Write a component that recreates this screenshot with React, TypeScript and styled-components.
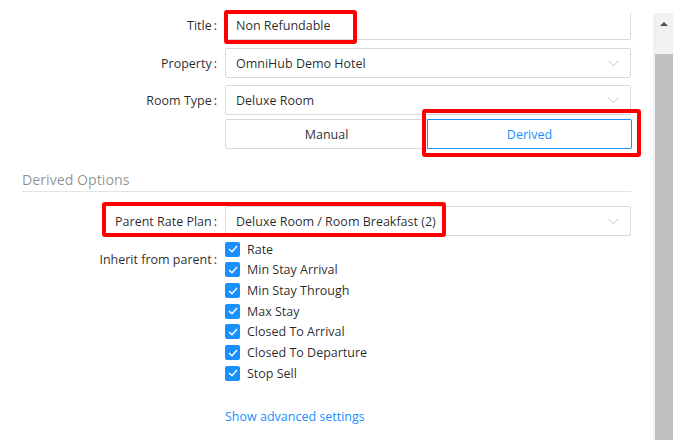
import React from 'react';
import styled, { createGlobalStyle } from 'styled-components';

const GlobalStyle = createGlobalStyle`
  html, body {
    margin: 0;
    padding: 0;
    background: #fff;
  }
  body {
    font-family: "Open Sans", "Noto Sans", sans-serif;
    color: rgba(0, 0, 0, 0.85);
  }
`;

const Page = styled.div`
  position: relative;
  width: 673px;
  height: 440px;
  padding-top: 13px;
  box-sizing: border-box;
  display: flex;
  overflow: hidden;
  background: #fff;
`;

const Scroller = styled.div`
  flex: 1;
  overflow: hidden;
`;

const Content = styled.div`
  margin-top: -3px;
  padding: 0 22px;
`;

const FormRow = styled.div<{ $mb?: number }>`
  display: grid;
  grid-template-columns: 203px 406px;
  margin-bottom: ${(p) => p.$mb ?? 8}px;
`;

const Label = styled.div<{ $top?: number }>`
  display: flex;
  justify-content: flex-end;
  align-items: center;
  height: 30px;
  margin-top: ${(p) => p.$top ?? 0}px;
  font-size: 12.5px;
  white-space: nowrap;

  &::after {
    content: ':';
    margin: 0 8px 0 2px;
  }
`;

const Field = styled.div`
  height: 30px;
  box-sizing: border-box;
  border: 1px solid #d9d9d9;
  border-radius: 2px;
  padding: 0 11px 0 10px;
  display: flex;
  align-items: center;
  justify-content: space-between;
  font-size: 12.5px;
`;

const Chevron = () => (
  <svg width="11" height="7" viewBox="0 0 11 7">
    <polyline points="0.5,0.8 5.5,5.8 10.5,0.8" fill="none" stroke="#c4c4c4" strokeWidth="1" />
  </svg>
);

const ButtonGroup = styled.div`
  display: grid;
  grid-template-columns: 203px 204px;
`;

const ModeButton = styled.div<{ $active?: boolean }>`
  height: 30px;
  box-sizing: border-box;
  border: 1px solid ${(p) => (p.$active ? '#1890ff' : '#d9d9d9')};
  color: ${(p) => (p.$active ? '#1890ff' : 'rgba(0, 0, 0, 0.85)')};
  margin-left: ${(p) => (p.$active ? '-1px' : '0')};
  position: relative;
  z-index: ${(p) => (p.$active ? 1 : 0)};
  border-radius: ${(p) => (p.$active ? '0 2px 2px 0' : '2px 0 0 2px')};
  display: flex;
  align-items: center;
  justify-content: center;
  font-size: 12.5px;
`;

const SectionTitle = styled.div`
  margin: 20px 0 14px;
  height: 22px;
  line-height: 22px;
  border-bottom: 1px solid #e3e3e3;
  font-size: 14.2px;
  color: rgba(0, 0, 0, 0.45);
`;

const CheckList = styled.div`
  display: flex;
  flex-direction: column;
`;

const CheckRow = styled.div`
  display: flex;
  align-items: center;
  height: 20.67px;
  font-size: 12.5px;
`;

const Box = styled.span`
  width: 15px;
  height: 15px;
  border-radius: 2px;
  background: #1890ff;
  margin-right: 7px;
  display: flex;
  align-items: center;
  justify-content: center;
`;

const Link = styled.a`
  grid-column: 2;
  font-size: 12.5px;
  color: #1890ff;
  text-decoration: none;
  line-height: 22px;
`;

const ScrollTrack = styled.div`
  width: 20px;
  background: #f1f1f1;
  display: flex;
  flex-direction: column;
  align-items: flex-end;
`;

const ScrollArrow = styled.div`
  width: 18px;
  height: 41px;
  padding-top: 9px;
  box-sizing: border-box;
  display: flex;
  justify-content: center;

  &::before {
    content: '';
    width: 0;
    height: 0;
    border-left: 4px solid transparent;
    border-right: 4px solid transparent;
    border-bottom: 4px solid #505050;
  }
`;

const Thumb = styled.div`
  width: 18px;
  flex: 1;
  background: #c1c1c1;
`;

const Highlight = styled.div`
  position: absolute;
  border: 4px solid #ff0000;
  border-radius: 3px;
  box-sizing: border-box;
  pointer-events: none;
`;

const inherits = [
  'Rate',
  'Min Stay Arrival',
  'Min Stay Through',
  'Max Stay',
  'Closed To Arrival',
  'Closed To Departure',
  'Stop Sell',
];

const Check = () => (
  <svg width="10" height="8" viewBox="0 0 10 8">
    <polyline points="1,4 4,6.8 9,1" fill="none" stroke="#fff" strokeWidth="1.4" />
  </svg>
);

export default function App() {
  return (
    <Page>
      <GlobalStyle />
      <Scroller>
        <Content>
          <FormRow $mb={8}>
            <Label>Title</Label>
            <Field>Non Refundable</Field>
          </FormRow>
          <FormRow $mb={7}>
            <Label>Property</Label>
            <Field>
              OmniHub Demo Hotel
              <Chevron />
            </Field>
          </FormRow>
          <FormRow $mb={4}>
            <Label>Room Type</Label>
            <Field>
              Deluxe Room
              <Chevron />
            </Field>
          </FormRow>
          <FormRow $mb={0}>
            <div />
            <ButtonGroup>
              <ModeButton>Manual</ModeButton>
              <ModeButton $active>Derived</ModeButton>
            </ButtonGroup>
          </FormRow>

          <SectionTitle>Derived Options</SectionTitle>

          <FormRow $mb={3}>
            <Label>Parent Rate Plan</Label>
            <Field>
              Deluxe Room / Room Breakfast (2)
              <Chevron />
            </Field>
          </FormRow>
          <FormRow $mb={22}>
            <Label $top={5}>Inherit from parent</Label>
            <CheckList>
              {inherits.map((name) => (
                <CheckRow key={name}>
                  <Box>
                    <Check />
                  </Box>
                  {name}
                </CheckRow>
              ))}
            </CheckList>
          </FormRow>
          <FormRow>
            <Link href="#">Show advanced settings</Link>
          </FormRow>
        </Content>
      </Scroller>
      <ScrollTrack>
        <ScrollArrow />
        <Thumb />
      </ScrollTrack>

      <Highlight style={{ left: 224, top: 10, width: 133, height: 34 }} />
      <Highlight style={{ left: 422, top: 109, width: 219, height: 48 }} />
      <Highlight style={{ left: 102, top: 202, width: 344, height: 35 }} />
    </Page>
  );
}
